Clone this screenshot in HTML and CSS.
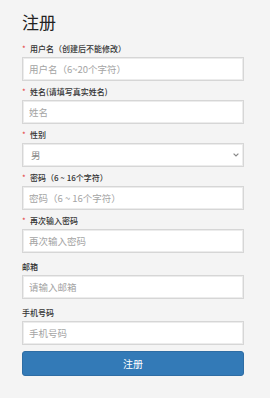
FILE: index.html
```html
<!DOCTYPE html>
<html lang="zh-CN">
<head>
<meta charset="utf-8">
<title>注册</title>
<link rel="stylesheet" href="styles.css">
</head>
<body>
<div class="page">
  <h1 class="title">注册</h1>
  <form class="form">
    <div class="group">
      <label class="label"><span class="star">*</span>用户名（创建后不能修改）</label>
      <input class="field" type="text" placeholder="用户名（6~20个字符）">
    </div>
    <div class="group">
      <label class="label"><span class="star">*</span>姓名(请填写真实姓名)</label>
      <input class="field" type="text" placeholder="姓名">
    </div>
    <div class="group">
      <label class="label"><span class="star">*</span>性别</label>
      <div class="select-wrap">
        <select class="field select">
          <option>男</option>
          <option>女</option>
        </select>
        <svg class="caret" width="6" height="4" viewBox="0 0 6 4"><path d="M0.6 0.6 L3 3 L5.4 0.6" fill="none" stroke="#888" stroke-width="1.2"/></svg>
      </div>
    </div>
    <div class="group">
      <label class="label"><span class="star">*</span>密码（6 ~ 16个字符）</label>
      <input class="field" type="password" placeholder="密码（6 ~ 16个字符）">
    </div>
    <div class="group">
      <label class="label"><span class="star">*</span>再次输入密码</label>
      <input class="field" type="password" placeholder="再次输入密码">
    </div>
    <div class="group optional">
      <label class="label">邮箱</label>
      <input class="field" type="text" placeholder="请输入邮箱">
    </div>
    <div class="group optional">
      <label class="label">手机号码</label>
      <input class="field" type="text" placeholder="手机号码">
    </div>
    <button class="btn" type="button">注册</button>
  </form>
</div>
</body>
</html>
```
FILE: styles.css
```css
html, body {
  margin: 0;
  padding: 0;
  background: #f4f4f4;
}
body {
  font-family: "Noto Sans CJK SC", "Noto Sans", sans-serif;
  color: #333;
}
.page {
  width: 222px;
  padding: 12px 26px 0 22px;
}
.title {
  margin: 0 0 11px;
  font-size: 17px;
  line-height: 20px;
  font-weight: 400;
  color: #222;
}
.form {
  display: flex;
  flex-direction: column;
}
.group {
  display: flex;
  flex-direction: column;
  margin-bottom: 5px;
}
.group.optional {
  padding-top: 3px;
}
.label {
  font-size: 8px;
  line-height: 12px;
  height: 12px;
  margin-bottom: 2px;
  font-weight: 500;
  color: #333;
  white-space: nowrap;
}
.star {
  display: inline-block;
  width: 8px;
  color: #e43c3c;
  font-weight: 400;
}
.field {
  display: block;
  box-sizing: border-box;
  width: 100%;
  height: 24px;
  margin: 0;
  padding: 0 6px;
  border: 1px solid #d6d6d6;
  box-shadow: inset 0 0 0 1px #ececec;
  border-radius: 0;
  background: #fff;
  font-family: "Noto Sans CJK SC", "Noto Sans", sans-serif;
  font-size: 9.5px;
  color: #555;
  outline: none;
}
.field::placeholder {
  color: #a4a4a4;
}
.select-wrap {
  position: relative;
  height: 24px;
}
.select {
  appearance: none;
  -webkit-appearance: none;
  padding-left: 8px;
  color: #888;
}
.caret {
  position: absolute;
  right: 5px;
  top: 10px;
}
.btn {
  display: block;
  box-sizing: border-box;
  width: 100%;
  height: 25px;
  margin-top: 1px;
  border: 1px solid #2e6da4;
  border-radius: 3px;
  background: #337ab7;
  color: #fff;
  font-family: "Noto Sans CJK SC", "Noto Sans", sans-serif;
  font-size: 10px;
  padding: 0;
}
```
